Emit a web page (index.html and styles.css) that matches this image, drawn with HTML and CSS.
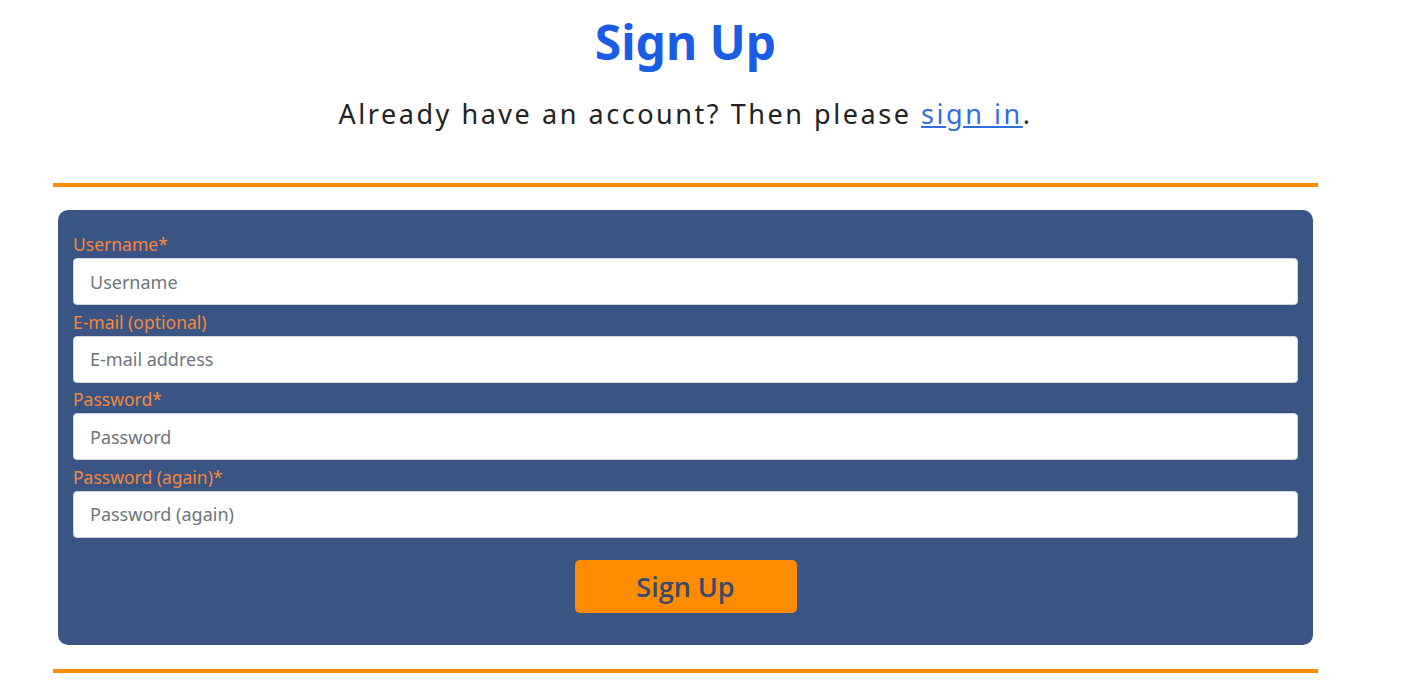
FILE: index.html
```html
<!DOCTYPE html>
<html>
<head>
<meta charset="utf-8">
<link rel="stylesheet" href="styles.css">
</head>
<body>
<main class="page">
  <h1 class="title">Sign Up</h1>
  <p class="lead">Already have an account? Then please <a href="#" class="link">sign in</a>.</p>
  <hr class="rule">
  <form class="card">
    <label class="label" for="u">Username*</label>
    <input class="input" id="u" type="text" placeholder="Username">
    <label class="label" for="e">E-mail (optional)</label>
    <input class="input" id="e" type="email" placeholder="E-mail address">
    <label class="label" for="p1">Password*</label>
    <input class="input" id="p1" type="password" placeholder="Password">
    <label class="label" for="p2">Password (again)*</label>
    <input class="input" id="p2" type="password" placeholder="Password (again)">
    <div class="actions">
      <button class="btn" type="button">Sign Up</button>
    </div>
  </form>
  <hr class="rule rule-bottom">
</main>
</body>
</html>
```

FILE: styles.css
```css
html, body {
  margin: 0;
  padding: 0;
  background: #fff;
}
body {
  font-family: "Noto Sans", "Open Sans", sans-serif;
  color: #212529;
}
.page {
  width: 1265px;
  margin-left: 53px;
  display: flex;
  flex-direction: column;
}
.title {
  margin: 12px 0 0;
  text-align: center;
  font-size: 48px;
  font-weight: 700;
  line-height: 60px;
  color: #1a5de4;
}
.lead {
  margin: 22px 0 0;
  text-align: center;
  font-size: 27px;
  line-height: 40px;
  letter-spacing: 2.55px;
  color: #222;
}
.link {
  color: #2f6fe0;
  text-decoration: underline;
}
.rule {
  margin: 49px 0 0;
  border: 0;
  height: 4px;
  background: #ff8c00;
}
.rule-bottom {
  margin-top: 24px;
}
.card {
  margin: 23px 5px 0;
  background: #3a5583;
  border-radius: 10px;
  padding: 23px 15px 32px;
  display: flex;
  flex-direction: column;
}
.label {
  font-size: 17.5px;
  line-height: 22px;
  color: #f5883c;
  height: 25px;
}
.input {
  height: 47px;
  box-sizing: border-box;
  border: 1px solid #ced4da;
  border-radius: 4px;
  padding: 0 16px;
  font-family: inherit;
  font-size: 18px;
  color: #495057;
  background: #fff;
  margin-bottom: 5.5px;
}
.input::placeholder {
  color: #6c757d;
}
.actions {
  display: flex;
  justify-content: center;
  margin-top: 17px;
}
.btn {
  width: 222px;
  height: 53px;
  border: 0;
  border-radius: 5px;
  background: #ff8c00;
  color: #3b4a6a;
  font-family: "Open Sans", "Noto Sans", sans-serif;
  font-size: 27px;
  font-weight: 600;
  line-height: 1;
  padding: 0;
  cursor: pointer;
}
```
